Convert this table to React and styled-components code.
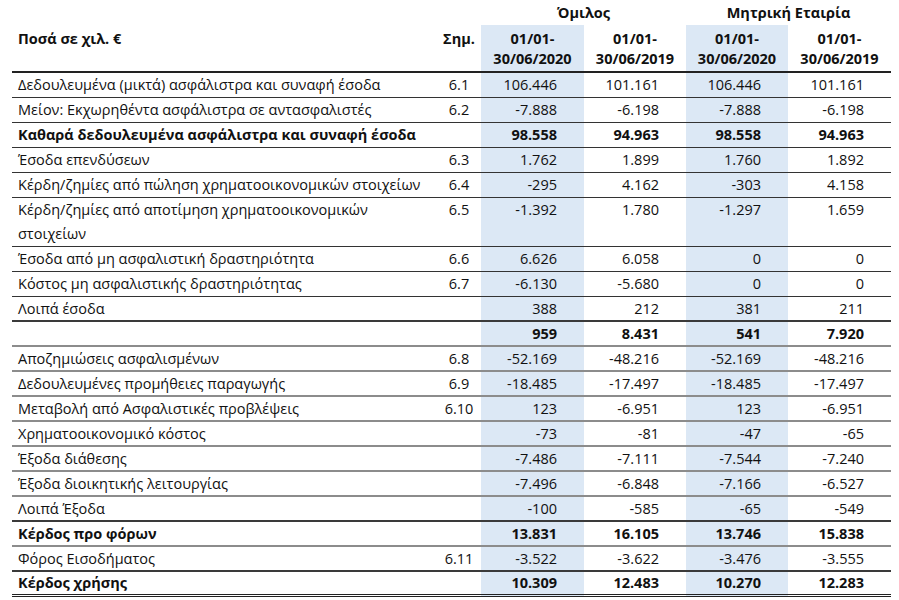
import styled, { createGlobalStyle } from "styled-components";

const GlobalStyle = createGlobalStyle`
  body {
    margin: 0;
    background: #ffffff;
    font-family: "Open Sans", "Noto Sans", sans-serif;
    color: #111111;
  }
`;

const Wrapper = styled.div`
  padding: 1px 8px 0 12px;
`;

const Table = styled.table`
  border-collapse: collapse;
  table-layout: fixed;
  width: 879px;
  font-size: 14.5px;
`;

const lines = {
  thin: { border: "1px solid #333333", lh: 24 },
  thick: { border: "2px solid #3a3a3a", lh: 23 },
  gray: { border: "2px solid #8c8c8c", lh: 23 },
  double: { border: "3px double #222222", lh: 22 },
};

const GroupTh = styled.th`
  font-weight: 700;
  text-align: center;
  height: 24px;
  line-height: 24px;
  padding: 0;
`;

const HeadTh = styled.th`
  font-weight: 700;
  vertical-align: top;
  text-align: ${(p) => p.$align || "center"};
  line-height: 20px;
  padding: 4px ${(p) => (p.$align === "left" ? "6px" : "0")} 2px;
  background: ${(p) => (p.$blue ? "#dce8f5" : "transparent")};
  border-bottom: 2px solid #222222;
`;

const Row = styled.tr`
  font-weight: ${(p) => (p.$bold ? 700 : 400)};
  border-bottom: ${(p) => lines[p.$line || "thin"].border};

  & > td {
    line-height: ${(p) => lines[p.$line || "thin"].lh}px;
  }
`;

const Label = styled.td`
  padding: 0 6px;
  white-space: nowrap;
  vertical-align: top;
`;

const Note = styled.td`
  text-align: center;
  vertical-align: top;
  padding: 0;
`;

const Value = styled.td`
  text-align: right;
  vertical-align: top;
  padding: 0 27px 0 0;
  background: ${(p) => (p.$blue ? "#dce8f5" : "transparent")};
`;

const rows = [
  { label: "Δεδουλευμένα (μικτά) ασφάλιστρα και συναφή έσοδα", note: "6.1", vals: ["106.446", "101.161", "106.446", "101.161"] },
  { label: "Μείον: Εκχωρηθέντα ασφάλιστρα σε αντασφαλιστές", note: "6.2", vals: ["-7.888", "-6.198", "-7.888", "-6.198"] },
  { label: "Καθαρά δεδουλευμένα ασφάλιστρα και συναφή έσοδα", vals: ["98.558", "94.963", "98.558", "94.963"], bold: true },
  { label: "Έσοδα επενδύσεων", note: "6.3", vals: ["1.762", "1.899", "1.760", "1.892"] },
  { label: "Κέρδη/ζημίες από πώληση χρηματοοικονομικών στοιχείων", note: "6.4", vals: ["-295", "4.162", "-303", "4.158"] },
  { label: ["Κέρδη/ζημίες από αποτίμηση χρηματοοικονομικών", "στοιχείων"], note: "6.5", vals: ["-1.392", "1.780", "-1.297", "1.659"] },
  { label: "Έσοδα από μη ασφαλιστική δραστηριότητα", note: "6.6", vals: ["6.626", "6.058", "0", "0"] },
  { label: "Κόστος μη ασφαλιστικής δραστηριότητας", note: "6.7", vals: ["-6.130", "-5.680", "0", "0"] },
  { label: "Λοιπά έσοδα", vals: ["388", "212", "381", "211"], line: "thick" },
  { label: "", vals: ["959", "8.431", "541", "7.920"], bold: true, line: "gray" },
  { label: "Αποζημιώσεις ασφαλισμένων", note: "6.8", vals: ["-52.169", "-48.216", "-52.169", "-48.216"], line: "gray" },
  { label: "Δεδουλευμένες προμήθειες παραγωγής", note: "6.9", vals: ["-18.485", "-17.497", "-18.485", "-17.497"], line: "gray" },
  { label: "Μεταβολή από Ασφαλιστικές προβλέψεις", note: "6.10", vals: ["123", "-6.951", "123", "-6.951"], line: "gray" },
  { label: "Χρηματοοικονομικό κόστος", vals: ["-73", "-81", "-47", "-65"], line: "gray" },
  { label: "Έξοδα διάθεσης", vals: ["-7.486", "-7.111", "-7.544", "-7.240"], line: "gray" },
  { label: "Έξοδα διοικητικής λειτουργίας", vals: ["-7.496", "-6.848", "-7.166", "-6.527"], line: "gray" },
  { label: "Λοιπά Έξοδα", vals: ["-100", "-585", "-65", "-549"], line: "thick" },
  { label: "Κέρδος προ φόρων", vals: ["13.831", "16.105", "13.746", "15.838"], bold: true, line: "gray" },
  { label: "Φόρος Εισοδήματος", note: "6.11", vals: ["-3.522", "-3.622", "-3.476", "-3.555"], line: "thick" },
  { label: "Κέρδος χρήσης", vals: ["10.309", "12.483", "10.270", "12.283"], bold: true, line: "double" },
];

const periods = ["30/06/2020", "30/06/2019", "30/06/2020", "30/06/2019"];

export default function App() {
  return (
    <Wrapper>
      <GlobalStyle />
      <Table>
        <colgroup>
          <col style={{ width: 425 }} />
          <col style={{ width: 44 }} />
          <col style={{ width: 103 }} />
          <col style={{ width: 102 }} />
          <col style={{ width: 102 }} />
          <col style={{ width: 103 }} />
        </colgroup>
        <thead>
          <tr>
            <GroupTh />
            <GroupTh />
            <GroupTh colSpan={2}>Όμιλος</GroupTh>
            <GroupTh colSpan={2}>Μητρική Εταιρία</GroupTh>
          </tr>
          <tr>
            <HeadTh $align="left">Ποσά σε χιλ. €</HeadTh>
            <HeadTh>Σημ.</HeadTh>
            {periods.map((p, i) => (
              <HeadTh key={i} $blue={i % 2 === 0}>
                01/01-
                <br />
                {p}
              </HeadTh>
            ))}
          </tr>
        </thead>
        <tbody>
          {rows.map((r, i) => (
            <Row key={i} $bold={r.bold} $line={r.line}>
              <Label>
                {Array.isArray(r.label) ? (
                  <>
                    {r.label[0]}
                    <br />
                    {r.label[1]}
                  </>
                ) : (
                  r.label
                )}
              </Label>
              <Note>{r.note}</Note>
              {r.vals.map((v, j) => (
                <Value key={j} $blue={j % 2 === 0}>
                  {v}
                </Value>
              ))}
            </Row>
          ))}
        </tbody>
      </Table>
    </Wrapper>
  );
}
